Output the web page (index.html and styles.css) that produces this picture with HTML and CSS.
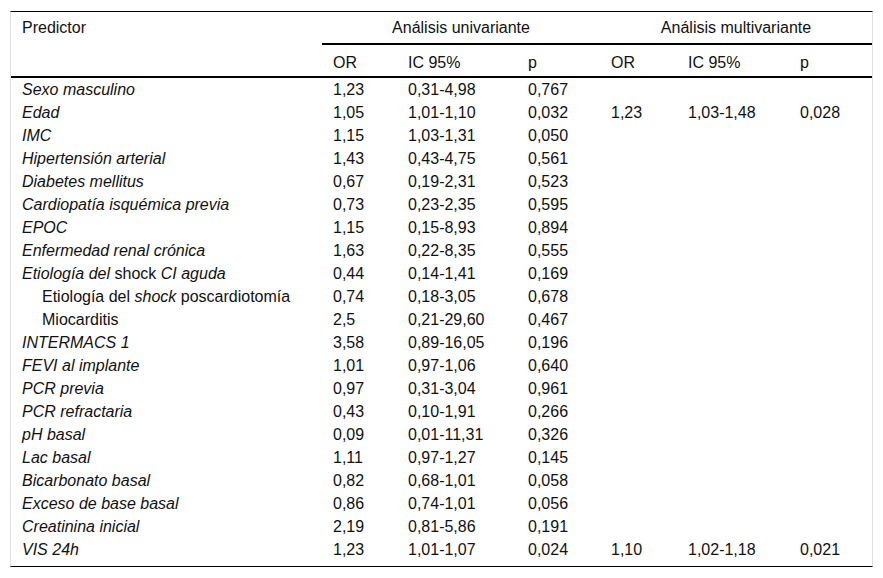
FILE: index.html
```html
<!DOCTYPE html>
<html lang="es">
<head>
<meta charset="utf-8">
<title>Tabla</title>
<link rel="stylesheet" href="styles.css">
</head>
<body>
<div class="wrap">
<div class="frame">
<table class="tbl">
<colgroup>
<col class="c0"><col class="c1"><col class="c2"><col class="c3"><col class="c4"><col class="c5"><col class="c6">
</colgroup>
<thead>
<tr class="h1">
<th rowspan="2" class="pred">Predictor</th>
<th colspan="3" class="grp">Análisis univariante</th>
<th colspan="3" class="grp">Análisis multivariante</th>
</tr>
<tr class="h2">
<th>OR</th><th>IC 95%</th><th>p</th><th>OR</th><th>IC 95%</th><th>p</th>
</tr>
</thead>
<tbody>
<tr><td><i>Sexo masculino</i></td><td>1,23</td><td>0,31-4,98</td><td>0,767</td><td></td><td></td><td></td></tr>
<tr><td><i>Edad</i></td><td>1,05</td><td>1,01-1,10</td><td>0,032</td><td>1,23</td><td>1,03-1,48</td><td>0,028</td></tr>
<tr><td><i>IMC</i></td><td>1,15</td><td>1,03-1,31</td><td>0,050</td><td></td><td></td><td></td></tr>
<tr><td><i>Hipertensión arterial</i></td><td>1,43</td><td>0,43-4,75</td><td>0,561</td><td></td><td></td><td></td></tr>
<tr><td><i>Diabetes mellitus</i></td><td>0,67</td><td>0,19-2,31</td><td>0,523</td><td></td><td></td><td></td></tr>
<tr><td><i>Cardiopatía isquémica previa</i></td><td>0,73</td><td>0,23-2,35</td><td>0,595</td><td></td><td></td><td></td></tr>
<tr><td><i>EPOC</i></td><td>1,15</td><td>0,15-8,93</td><td>0,894</td><td></td><td></td><td></td></tr>
<tr><td><i>Enfermedad renal crónica</i></td><td>1,63</td><td>0,22-8,35</td><td>0,555</td><td></td><td></td><td></td></tr>
<tr><td><i>Etiología del</i> shock <i>CI aguda</i></td><td>0,44</td><td>0,14-1,41</td><td>0,169</td><td></td><td></td><td></td></tr>
<tr><td class="ind">Etiología del <i>shock</i> poscardiotomía</td><td>0,74</td><td>0,18-3,05</td><td>0,678</td><td></td><td></td><td></td></tr>
<tr><td class="ind">Miocarditis</td><td>2,5</td><td>0,21-29,60</td><td>0,467</td><td></td><td></td><td></td></tr>
<tr><td><i>INTERMACS 1</i></td><td>3,58</td><td>0,89-16,05</td><td>0,196</td><td></td><td></td><td></td></tr>
<tr><td><i>FEVI al implante</i></td><td>1,01</td><td>0,97-1,06</td><td>0,640</td><td></td><td></td><td></td></tr>
<tr><td><i>PCR previa</i></td><td>0,97</td><td>0,31-3,04</td><td>0,961</td><td></td><td></td><td></td></tr>
<tr><td><i>PCR refractaria</i></td><td>0,43</td><td>0,10-1,91</td><td>0,266</td><td></td><td></td><td></td></tr>
<tr><td><i>pH basal</i></td><td>0,09</td><td>0,01-11,31</td><td>0,326</td><td></td><td></td><td></td></tr>
<tr><td><i>Lac basal</i></td><td>1,11</td><td>0,97-1,27</td><td>0,145</td><td></td><td></td><td></td></tr>
<tr><td><i>Bicarbonato basal</i></td><td>0,82</td><td>0,68-1,01</td><td>0,058</td><td></td><td></td><td></td></tr>
<tr><td><i>Exceso de base basal</i></td><td>0,86</td><td>0,74-1,01</td><td>0,056</td><td></td><td></td><td></td></tr>
<tr><td><i>Creatinina inicial</i></td><td>2,19</td><td>0,81-5,86</td><td>0,191</td><td></td><td></td><td></td></tr>
<tr class="last"><td><i>VIS 24h</i></td><td>1,23</td><td>1,01-1,07</td><td>0,024</td><td>1,10</td><td>1,02-1,18</td><td>0,021</td></tr>
</tbody>
</table>
</div>
</div>
</body>
</html>
```
FILE: styles.css
```css
html, body {
  margin: 0;
  padding: 0;
  background: #fff;
}
.wrap {
  padding: 11px 10px 0 10px;
}
.frame {
  width: 861px;
  border-top: 1px solid #000;
  border-bottom: 1px solid #000;
  border-left: 1px solid #e2e2e2;
  border-right: 1px solid #e2e2e2;
}
.tbl {
  width: 861px;
  table-layout: fixed;
  border-collapse: separate;
  border-spacing: 0;
  font-family: "Liberation Sans", Arial, sans-serif;
  font-size: 16px;
  line-height: 16px;
  color: #111;
}
.c0 { width: 311px; }
.c1 { width: 75px; }
.c2 { width: 120px; }
.c3 { width: 83px; }
.c4 { width: 77px; }
.c5 { width: 112px; }
.c6 { width: 83px; }
.tbl th {
  font-weight: normal;
  text-align: left;
  padding: 0 0 0 11px;
  vertical-align: top;
  white-space: nowrap;
  box-sizing: border-box;
}
.h1 th {
  height: 33px;
  padding-top: 8px;
}
.h1 .grp {
  text-align: center;
  padding-left: 0;
  border-bottom: 2px solid #000;
}
.h1 .pred {
  border-bottom: 2px solid #000;
}
.h2 th {
  height: 33px;
  padding-top: 10px;
  border-bottom: 2px solid #000;
}
.tbl td {
  padding: 4px 0 3px 11px;
  height: 16px;
  white-space: nowrap;
  vertical-align: top;
}
.tbl td.ind {
  padding-left: 31px;
}
.last td {
  padding-bottom: 8px;
}
```
